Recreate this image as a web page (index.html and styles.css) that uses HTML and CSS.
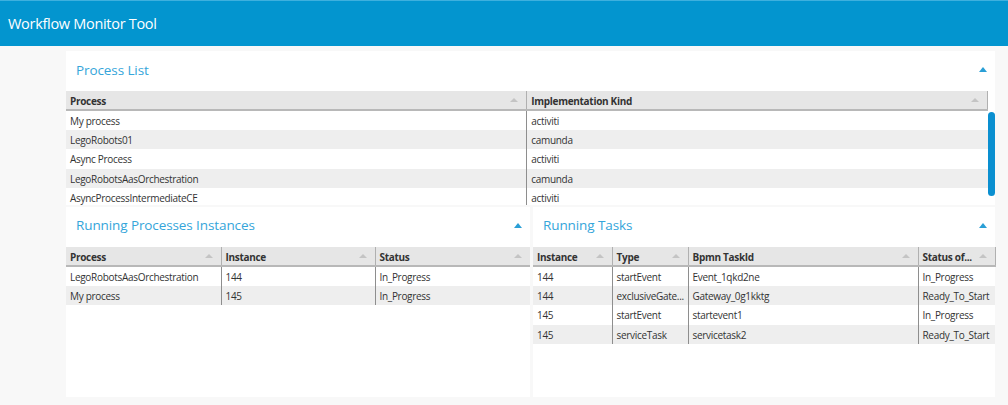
FILE: index.html
```html
<!DOCTYPE html>
<html lang="en">
<head>
<meta charset="utf-8">
<title>Workflow Monitor Tool</title>
<link rel="stylesheet" href="styles.css">
</head>
<body>
<header class="topbar"><span class="app-title">Workflow Monitor Tool</span></header>
<main class="content">
  <section class="panel panel-top">
    <div class="panel-head"><h2 class="panel-title">Process List</h2><span class="chev"></span></div>
    <div class="grid-area">
      <div class="grid-clip">
        <table class="grid">
          <colgroup><col class="c-half"><col class="c-half"></colgroup>
          <thead><tr><th>Process<span class="sort"></span></th><th>Implementation Kind<span class="sort"></span></th></tr></thead>
          <tbody>
            <tr><td>My process</td><td>activiti</td></tr>
            <tr><td>LegoRobots01</td><td>camunda</td></tr>
            <tr><td>Async Process</td><td>activiti</td></tr>
            <tr><td>LegoRobotsAasOrchestration</td><td>camunda</td></tr>
            <tr><td>AsyncProcessIntermediateCE</td><td>activiti</td></tr>
          </tbody>
        </table>
      </div>
      <div class="scrolltrack"><div class="thumb"></div></div>
    </div>
  </section>
  <div class="lower">
    <section class="panel panel-left">
      <div class="panel-head"><h2 class="panel-title">Running Processes Instances</h2><span class="chev"></span></div>
      <table class="grid">
        <colgroup><col class="c-p1"><col class="c-p2"><col class="c-p3"></colgroup>
        <thead><tr><th>Process<span class="sort"></span></th><th>Instance<span class="sort"></span></th><th>Status<span class="sort"></span></th></tr></thead>
        <tbody>
          <tr><td>LegoRobotsAasOrchestration</td><td>144</td><td>In_Progress</td></tr>
          <tr><td>My process</td><td>145</td><td>In_Progress</td></tr>
        </tbody>
      </table>
    </section>
    <section class="panel panel-right">
      <div class="panel-head"><h2 class="panel-title">Running Tasks</h2><span class="chev"></span></div>
      <table class="grid">
        <colgroup><col class="c-t1"><col class="c-t2"><col class="c-t3"><col class="c-t4"></colgroup>
        <thead><tr><th>Instance<span class="sort"></span></th><th>Type<span class="sort"></span></th><th>Bpmn TaskId<span class="sort"></span></th><th>Status of...<span class="sort"></span></th></tr></thead>
        <tbody>
          <tr><td>144</td><td>startEvent</td><td>Event_1qkd2ne</td><td>In_Progress</td></tr>
          <tr><td>144</td><td>exclusiveGate...</td><td>Gateway_0g1kktg</td><td>Ready_To_Start</td></tr>
          <tr><td>145</td><td>startEvent</td><td>startevent1</td><td>In_Progress</td></tr>
          <tr><td>145</td><td>serviceTask</td><td>servicetask2</td><td>Ready_To_Start</td></tr>
        </tbody>
      </table>
    </section>
  </div>
</main>
</body>
</html>
```
FILE: styles.css
```css
* { box-sizing: border-box; }
html, body { margin: 0; padding: 0; }
body {
  background: #f8f8f8;
  font-family: "Open Sans", "Noto Sans", sans-serif;
  color: #333;
  width: 1008px;
  height: 405px;
  overflow: hidden;
}
.topbar {
  height: 46px;
  background: #0395cf;
  border-top: 1px solid #3eb0de;
  display: flex;
  align-items: center;
  padding-left: 8px;
}
.app-title {
  color: #fff;
  font-size: 14.5px;
  letter-spacing: -0.3px;
}
.content {
  margin-left: 66px;
  width: 929px;
  padding-top: 5px;
  display: flex;
  flex-direction: column;
  gap: 2px;
}
.panel {
  background: #fff;
  display: flex;
  flex-direction: column;
}
.panel-top { height: 154px; }
.panel-head {
  height: 40px;
  display: flex;
  align-items: center;
  justify-content: space-between;
  padding: 0 8px 3px 10px;
}
.panel-left .panel-head, .panel-right .panel-head { padding-bottom: 4px; }
.panel-title {
  margin: 0;
  font-weight: normal;
  font-size: 13.5px;
  letter-spacing: -0.1px;
  color: #35a5da;
}
.chev {
  width: 0;
  height: 0;
  border-left: 4px solid transparent;
  border-right: 4px solid transparent;
  border-bottom: 5px solid #2a9fd6;
}
.grid-area {
  display: flex;
  height: 114px;
}
.grid-clip {
  flex: 1;
  overflow: hidden;
}
.scrolltrack {
  width: 7px;
  background: #fff;
  padding-top: 21px;
  height: 106px;
}
.thumb {
  width: 7px;
  height: 84px;
  background: #0a8fd0;
  border-radius: 4px;
}
.grid {
  width: 100%;
  table-layout: fixed;
  border-collapse: collapse;
  font-size: 10px;
  letter-spacing: -0.3px;
}
.grid th {
  background: #e6e6e6;
  height: 19px;
  border-bottom: 2px solid #b8b8b8;
  border-left: 1px solid #b0b0b0;
  text-align: left;
  font-weight: bold;
  padding: 1px 4px 0;
  position: relative;
  color: #333;
  white-space: nowrap;
  overflow: hidden;
}
.grid th:first-child, .grid td:first-child { border-left: none; }
.grid td {
  height: 19.5px;
  padding: 1px 4px 0;
  border-left: 1px solid #8e8e8e;
  white-space: nowrap;
  overflow: hidden;
}
.grid tbody tr:nth-child(even) td { background: #eeeeee; }
.sort {
  position: absolute;
  right: 8px;
  top: 7px;
  width: 0;
  height: 0;
  border-left: 4px solid transparent;
  border-right: 4px solid transparent;
  border-bottom: 4px solid #c4c4c4;
}
.panel-top .grid th:last-child { border-right: 1px solid #b0b0b0; }
.lower {
  display: flex;
  gap: 3px;
}
.panel-left { width: 464px; height: 190px; }
.panel-right { width: 462px; height: 190px; }
.c-half { width: 50%; }
.c-p1 { width: 155px; }
.c-p2 { width: 154px; }
.c-p3 { width: 155px; }
.c-t1 { width: 79px; }
.c-t2 { width: 76px; }
.c-t3 { width: 230px; }
.c-t4 { width: 77px; }
.panel-right .grid td:last-child, .panel-right .grid th:last-child { padding-right: 2px; }
.panel-right .grid th:last-child { border-right: 1px solid #b0b0b0; }
```
